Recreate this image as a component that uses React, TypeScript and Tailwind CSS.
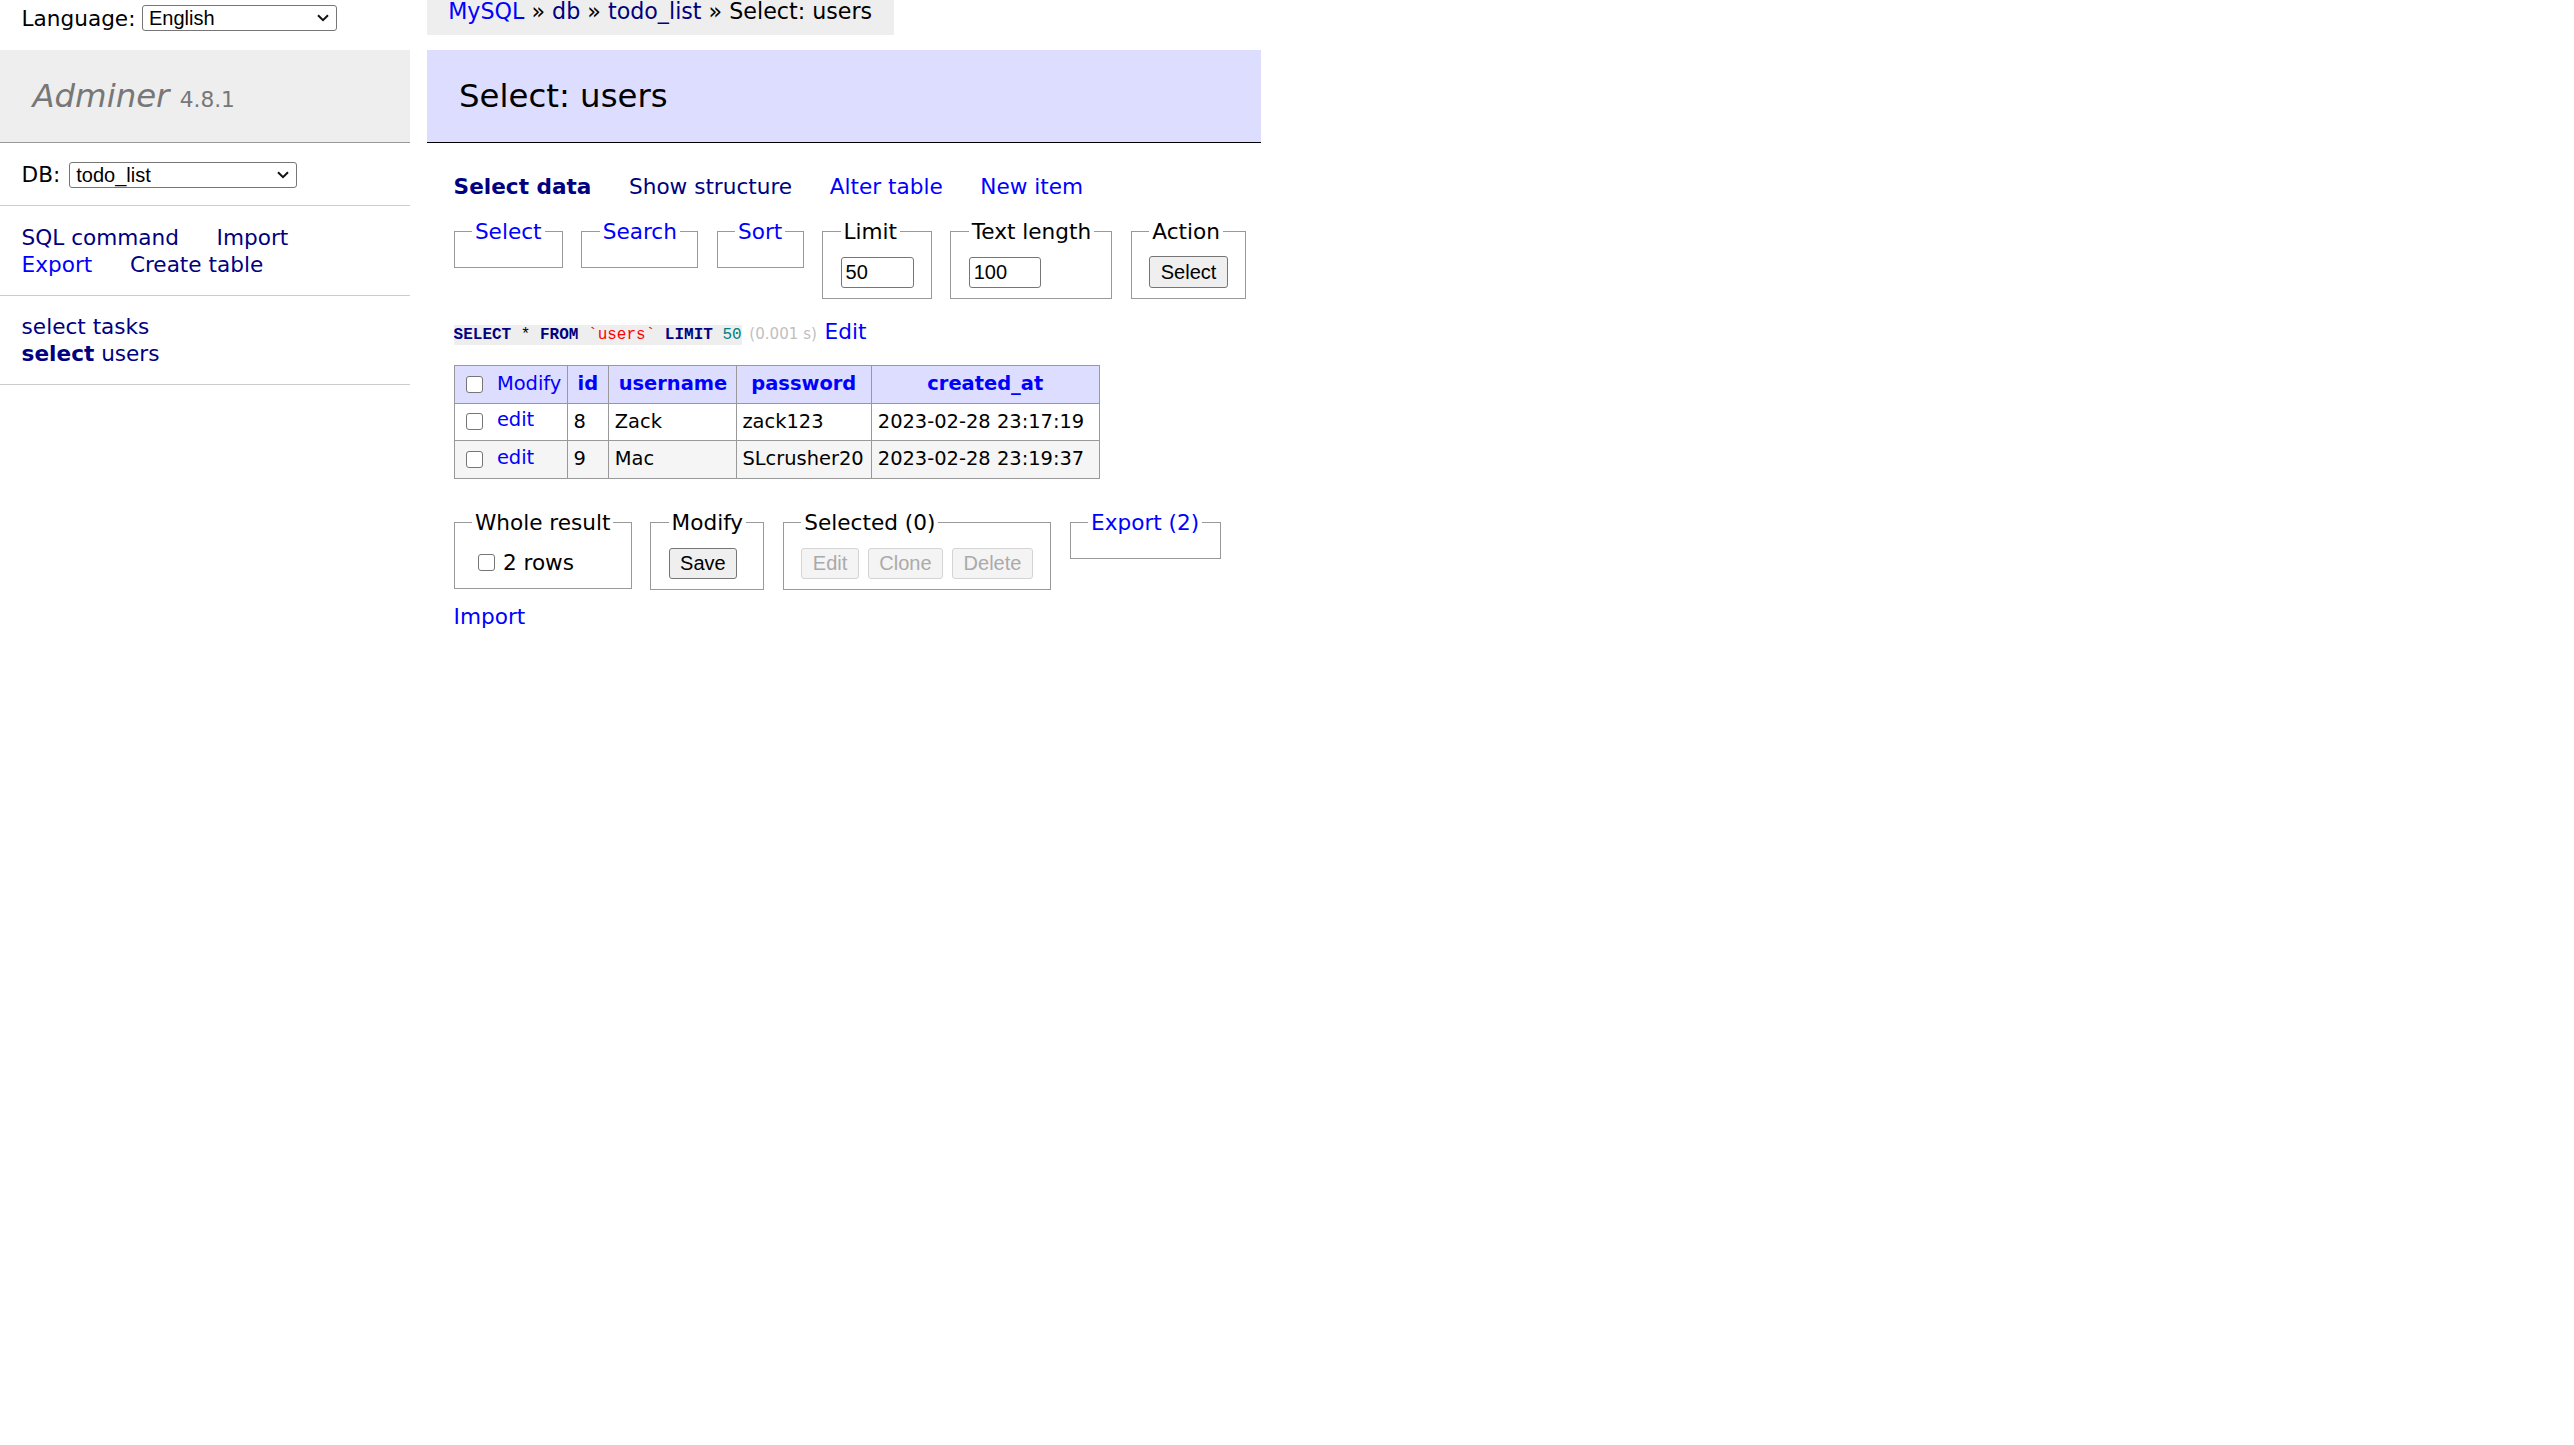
import type { ReactNode } from 'react';

function FakeSelect({ value, className }: { value: string; className: string }) {
  return (
    <div
      className={`flex items-center justify-between h-[26px] border border-[#767676] rounded-[3px] bg-white pl-[6px] pr-[7px] font-['Liberation_Sans',Arial,sans-serif] text-[20px] leading-none text-black ${className}`}
    >
      <span>{value}</span>
      <svg width="12" height="8" viewBox="0 0 12 8" fill="none">
        <path d="M1 1.2 L6 6.2 L11 1.2" stroke="#111" strokeWidth="2" />
      </svg>
    </div>
  );
}

function Check() {
  return <span className="inline-block shrink-0 w-[17px] h-[17px] border-[1.5px] border-[#767676] rounded-[3px] bg-white" />;
}

function Fieldset({ legend, children }: { legend: ReactNode; children?: ReactNode }) {
  return (
    <fieldset className="border border-[#999] px-[17.3px] pt-[12px] pb-[10px]">
      <legend className="px-[3px]">{legend}</legend>
      {children}
    </fieldset>
  );
}

function Button({ label, disabled }: { label: string; disabled?: boolean }) {
  return (
    <button
      className={
        disabled
          ? "h-[31.7px] px-[10.5px] border border-[#d4d4d4] rounded-[3px] bg-[#f4f4f4] text-[#aaa] font-['Liberation_Sans',Arial,sans-serif] text-[20px] leading-none"
          : "h-[31.7px] px-[10.5px] border border-[#767676] rounded-[3px] bg-[#efefef] text-black font-['Liberation_Sans',Arial,sans-serif] text-[20px] leading-none"
      }
    >
      {label}
    </button>
  );
}

function TextInput({ value, className }: { value: string; className: string }) {
  return (
    <div
      className={`flex items-center h-[31px] border border-[#767676] rounded-[3px] bg-white px-[4px] font-['Liberation_Sans',Arial,sans-serif] text-[20px] leading-none ${className}`}
    >
      {value}
    </div>
  );
}

const rows = [
  { id: '8', username: 'Zack', password: 'zack123', created: '2023-02-28 23:17:19' },
  { id: '9', username: 'Mac', password: 'SLcrusher20', created: '2023-02-28 23:19:37' },
];

export default function App() {
  return (
    <div className="flex items-start min-h-screen bg-white text-black font-['DejaVu_Sans',Verdana,sans-serif] text-[21.6px] leading-[27px]">
      {/* sidebar */}
      <aside className="w-[410px] shrink-0">
        <div className="h-[50px] pl-[21.6px] pb-[14px] flex items-center gap-[6.5px]">
          <span>Language:</span>
          <FakeSelect value="English" className="w-[195px]" />
        </div>
        <h1 className="bg-[#eee] border-b border-[#999] px-[32.4px] py-[25.9px] text-[32.4px] leading-[40.5px] text-[#777]">
          <span className="italic">Adminer</span> <span className="text-[21.7px] leading-none">4.8.1</span>
        </h1>
        <div className="border-b border-[#ccc] px-[21.6px] pt-[17px] pb-[16px]">
          <div className="flex items-center h-[29px] gap-[9px]">
            <span>DB:</span>
            <FakeSelect value="todo_list" className="w-[228px]" />
          </div>
        </div>
        <div className="border-b border-[#ccc] px-[21.6px] py-[17.3px]">
          <div className="flex gap-[37.6px] whitespace-nowrap">
            <a className="text-[#000080]">SQL command</a>
            <a className="text-[#000080]">Import</a>
          </div>
          <div className="flex gap-[37.6px] whitespace-nowrap">
            <a className="text-[#00f]">Export</a>
            <a className="text-[#000080]">Create table</a>
          </div>
        </div>
        <ul className="border-b border-[#ccc] px-[21.6px] py-[17.3px] whitespace-nowrap">
          <li>
            <a className="text-[#000080]">select</a> <a className="text-[#000080]">tasks</a>
          </li>
          <li>
            <a className="text-[#000080] font-bold">select</a> <a className="text-[#000080]">users</a>
          </li>
        </ul>
      </aside>

      {/* content */}
      <main className="ml-[16.6px] w-[834px] shrink-0">
        <div className="w-fit h-[35px] bg-[#eee] px-[21.6px] text-[22.2px] leading-[22px] whitespace-nowrap">
          <a className="text-[#00f]">MySQL</a> » <a className="text-[#000080]">db</a> »{' '}
          <a className="text-[#000080]">todo_list</a> » Select: users
        </div>
        <h2 className="mt-[15px] bg-[#ddf] border-b border-black px-[32.4px] py-[25.9px] text-[32.4px] leading-[40.5px]">
          Select: users
        </h2>

        <div className="pl-[27px]">
          <div className="mt-[30px] flex gap-[37.6px] whitespace-nowrap">
            <a className="text-[#000080] font-bold">Select data</a>
            <a className="text-[#000080]">Show structure</a>
            <a className="text-[#00f]">Alter table</a>
            <a className="text-[#00f]">New item</a>
          </div>

          <div className="mt-[17.3px] flex items-start gap-[18.6px]">
            <Fieldset legend={<a className="text-[#00f]">Select</a>} />
            <Fieldset legend={<a className="text-[#00f]">Search</a>} />
            <Fieldset legend={<a className="text-[#00f]">Sort</a>} />
            <Fieldset legend="Limit">
              <TextInput value="50" className="w-[73px]" />
            </Fieldset>
            <Fieldset legend="Text length">
              <TextInput value="100" className="w-[72px]" />
            </Fieldset>
            <Fieldset legend="Action">
              <div className="h-[31px] flex items-center">
                <Button label="Select" />
              </div>
            </Fieldset>
          </div>

          <div className="mt-[19px] flex items-baseline whitespace-pre">
            <code className="bg-[#eee] font-['Liberation_Mono',monospace] text-[16px] leading-[20px]">
              <b className="text-[#000080]">SELECT</b> * <b className="text-[#000080]">FROM</b>{' '}
              <span className="text-[#f00]">`users`</span> <b className="text-[#000080]">LIMIT</b>{' '}
              <span className="text-[#007f7f]">50</span>
            </code>
            <span className="ml-[7.6px] text-[15.1px] text-[#c0c0c0]">(0.001 s)</span>
            <a className="ml-[7.6px] text-[#00f]">Edit</a>
          </div>

          <table className="mt-[17px] border-collapse table-fixed w-[645px] text-[19.44px] leading-[24.3px]">
            <colgroup>
              <col className="w-[113px]" />
              <col className="w-[41.4px]" />
              <col className="w-[127.6px]" />
              <col className="w-[135.4px]" />
              <col className="w-[227.6px]" />
            </colgroup>
            <thead>
              <tr className="bg-[#ddf]">
                <td className="h-[38px] border border-[#999] px-[5.8px]">
                  <div className="flex items-center">
                    <span className="ml-[6px] mr-[13.5px] flex"><Check /></span>
                    <a className="text-[#00f]">Modify</a>
                  </div>
                </td>
                <th className="h-[38px] border border-[#999] px-[9.7px] text-center font-bold text-[#00f]">id</th>
                <th className="h-[38px] border border-[#999] px-[9.7px] text-center font-bold text-[#00f]">username</th>
                <th className="h-[38px] border border-[#999] px-[9.7px] text-center font-bold text-[#00f]">password</th>
                <th className="h-[38px] border border-[#999] px-[9.7px] text-center font-bold text-[#00f]">created_at</th>
              </tr>
            </thead>
            <tbody>
              {rows.map((r, i) => (
                <tr key={r.id} className={i % 2 === 1 ? 'bg-[#f5f5f5]' : 'bg-white'}>
                  <td className="h-[37.5px] border border-[#999] px-[5.8px]">
                    <div className="flex items-center">
                      <span className="ml-[6px] mr-[13.5px] flex"><Check /></span>
                      <a className="text-[#00f] -mt-[3px]">edit</a>
                    </div>
                  </td>
                  <td className="h-[37.5px] border border-[#999] px-[5.8px] whitespace-nowrap">{r.id}</td>
                  <td className="h-[37.5px] border border-[#999] px-[5.8px] whitespace-nowrap">{r.username}</td>
                  <td className="h-[37.5px] border border-[#999] px-[5.8px] whitespace-nowrap">{r.password}</td>
                  <td className="h-[37.5px] border border-[#999] px-[5.8px] whitespace-nowrap">{r.created}</td>
                </tr>
              ))}
            </tbody>
          </table>

          <div className="mt-[30px] flex items-start gap-[18.6px]">
            <Fieldset legend="Whole result">
              <div className="h-[30px] flex items-center">
                <span className="ml-[6px] mr-[8px] flex"><Check /></span>
                <span>2 rows</span>
              </div>
            </Fieldset>
            <Fieldset legend="Modify">
              <Button label="Save" />
            </Fieldset>
            <Fieldset legend="Selected (0)">
              <div className="flex gap-[9px]">
                <Button label="Edit" disabled />
                <Button label="Clone" disabled />
                <Button label="Delete" disabled />
              </div>
            </Fieldset>
            <Fieldset legend={<a className="text-[#00f]">Export (2)</a>} />
          </div>

          <p className="mt-[13px]">
            <a className="text-[#00f]">Import</a>
          </p>
        </div>
      </main>
    </div>
  );
}
